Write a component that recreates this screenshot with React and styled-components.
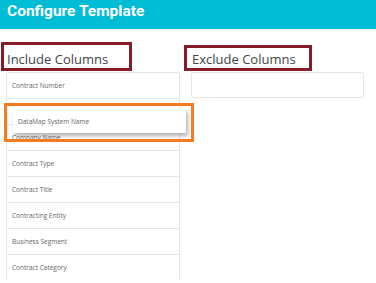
import React from "react";
import styled, { createGlobalStyle } from "styled-components";

const Global = createGlobalStyle`
  html, body { margin: 0; padding: 0; background: #fff; overflow: hidden; }
  body { font-family: "Open Sans", "Liberation Sans", sans-serif; }
`;

const Page = styled.div`
  position: relative;
  width: 376px;
  height: 283px;
  overflow: hidden;
`;

const Header = styled.header`
  height: 29px;
  background: #00bcd4;
  padding: 0 7px;
  box-sizing: border-box;
`;

const Title = styled.h1`
  margin: 0;
  font-family: Roboto, "Liberation Sans", sans-serif;
  font-weight: 700;
  font-size: 15.5px;
  line-height: 22px;
  color: #fff;
`;

const Columns = styled.main`
  display: grid;
  grid-template-columns: 174px 173px;
  column-gap: 11px;
  padding: 21px 0 0 6px;
`;

const Column = styled.section`
  display: flex;
  flex-direction: column;
`;

const Heading = styled.h2`
  margin: 0 0 3px;
  padding-left: ${(p) => p.$indent || 1}px;
  font-size: 13px;
  font-weight: 400;
  line-height: 19px;
  color: #444;
`;

const List = styled.ul`
  list-style: none;
  margin: 0;
  padding: 0;
  border: 1px solid #e6e6e6;
  border-bottom: ${(p) => (p.$open ? "none" : "1px solid #e6e6e6")};
  border-radius: 2px;
  max-height: ${(p) => (p.$open ? "207px" : "none")};
  min-height: ${(p) => (p.$open ? "0" : "24px")};
  overflow: hidden;
`;

const Row = styled.li`
  height: 25px;
  border-bottom: 1px solid #e6e6e6;
  display: flex;
  align-items: center;
  padding-left: 5px;
  font-size: 6.5px;
  color: #666;
`;

const DragCard = styled.div`
  position: absolute;
  left: 13px;
  top: 109px;
  width: 173px;
  height: 24px;
  background: #fff;
  box-shadow: 2px 3px 4px rgba(0, 0, 0, 0.3);
  display: flex;
  align-items: center;
  padding-left: 5px;
  box-sizing: border-box;
  font-size: 6.5px;
  color: #666;
`;

const Mark = styled.div`
  position: absolute;
  box-sizing: border-box;
  left: ${(p) => p.$x}px;
  top: ${(p) => p.$y}px;
  width: ${(p) => p.$w}px;
  height: ${(p) => p.$h}px;
  border: ${(p) => p.$t}px solid ${(p) => p.$c};
  pointer-events: none;
`;

const included = [
  "Contract Number",
  "",
  "Company Name",
  "Contract Type",
  "Contract Title",
  "Contracting Entity",
  "Business Segment",
  "Contract Category",
];

export default function App() {
  return (
    <Page>
      <Global />
      <Header>
        <Title>Configure Template</Title>
      </Header>
      <Columns>
        <Column>
          <Heading $indent={1}>Include Columns</Heading>
          <List $open>
            {included.map((c, i) => (
              <Row key={i}>{c}</Row>
            ))}
          </List>
        </Column>
        <Column>
          <Heading $indent={1}>Exclude Columns</Heading>
          <List />
        </Column>
      </Columns>
      <DragCard>DataMap System Name</DragCard>
      <Mark $x={1} $y={42} $w={131} $h={29} $t={3} $c="#861c28" />
      <Mark $x={184} $y={45} $w={128} $h={26} $t={3} $c="#861c28" />
      <Mark $x={4} $y={103} $w={190} $h={39} $t={3} $c="#f47b20" />
    </Page>
  );
}
